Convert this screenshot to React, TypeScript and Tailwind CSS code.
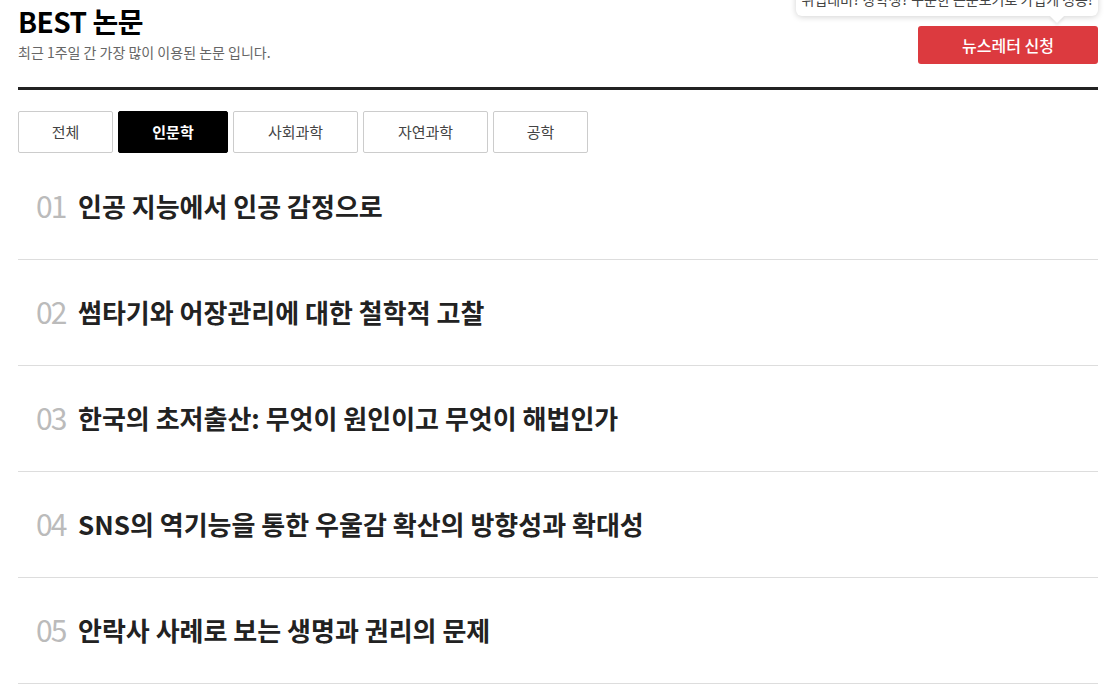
import React from "react";

const tabs = ["전체", "인문학", "사회과학", "자연과학", "공학"];
const tabW = ["w-[95px]", "w-[110px]", "w-[125px]", "w-[125px]", "w-[95px]"];
const items = [
  "인공 지능에서 인공 감정으로",
  "썸타기와 어장관리에 대한 철학적 고찰",
  "한국의 초저출산: 무엇이 원인이고 무엇이 해법인가",
  "SNS의 역기능을 통한 우울감 확산의 방향성과 확대성",
  "안락사 사례로 보는 생명과 권리의 문제",
];

export default function App() {
  return (
    <div
      className="w-[1119px] h-[699px] overflow-hidden bg-white"
      style={{ fontFamily: '"Noto Sans CJK KR", "Noto Sans", sans-serif' }}
    >
      <div className="mx-[18px] w-[1080px]">
        <div className="flex justify-between h-[87px]">
          <div className="pt-[3px]">
            <h1 className="text-[28px] leading-[36px] font-bold text-black tracking-[-0.5px]">BEST 논문</h1>
            <p className="text-[14px] leading-[18px] text-[#666] mt-[4px]">최근 1주일 간 가장 많이 이용된 논문 입니다.</p>
          </div>
          <div className="relative pt-[26px]">
            <div className="absolute right-0 top-[-14px] w-[302px] h-[30px] bg-white rounded-[6px] shadow-[0_1px_6px_rgba(0,0,0,0.18)] flex items-center justify-center">
              <span className="text-[14px] text-[#444] whitespace-nowrap mt-[-3px]">취업대비? 장학생? 꾸준한 논문보기로 가볍게 성공!</span>
              <div className="absolute right-[36px] bottom-[-5px] w-[10px] h-[10px] bg-white rotate-45 shadow-[2px_2px_3px_rgba(0,0,0,0.08)]" />
            </div>
            <button className="w-[180px] h-[38px] bg-[#dc3a3f] rounded-[3px] text-white text-[16px] font-medium">
              뉴스레터 신청
            </button>
          </div>
        </div>
        <div className="h-[3px] bg-[#222]" />
        <div className="flex gap-[5px] mt-[21px]">
          {tabs.map((t, i) => (
            <div
              key={t}
              className={
                i === 1
                  ? `${tabW[i]} h-[42px] flex items-center justify-center bg-black text-white font-bold text-[15px] rounded-[2px] border border-black`
                  : `${tabW[i]} h-[42px] flex items-center justify-center bg-white text-[#444] text-[15px] border border-[#ccc] rounded-[2px]`
              }
            >
              {t}
            </div>
          ))}
        </div>
        <div className="mt-[1px]">
          {items.map((t, i) => (
            <div key={i} className="h-[106px] border-b border-[#ddd] flex items-center pl-[18px] pb-[2px]">
              <span className="text-[30px] text-[#bbb] w-[42px] tracking-[-2px] mt-[-1px]">0{i + 1}</span>
              <span className="text-[26px] font-bold text-[#222]">{t}</span>
            </div>
          ))}
        </div>
      </div>
    </div>
  );
}
